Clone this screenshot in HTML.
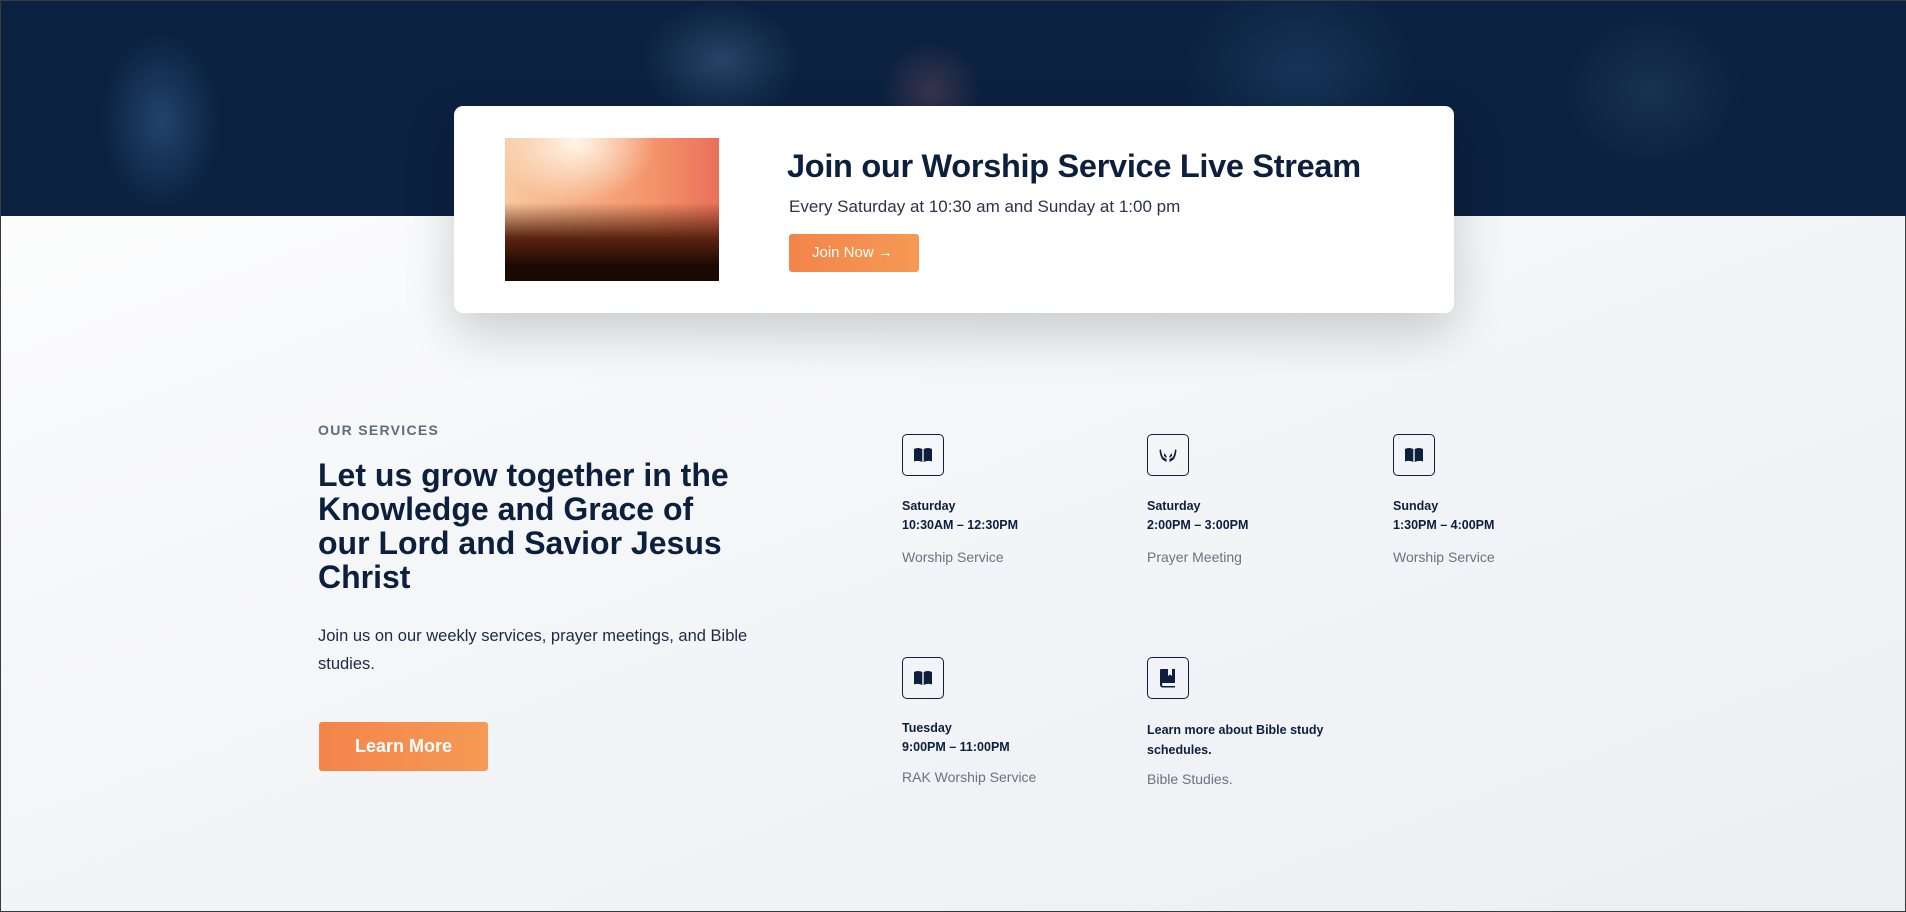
<!DOCTYPE html>
<html><head><meta charset="utf-8"><style>
*{margin:0;padding:0;box-sizing:border-box}
html,body{width:1906px;height:912px;overflow:hidden}
body{font-family:"Liberation Sans",sans-serif;position:relative;background:linear-gradient(160deg,#ffffff 0%,#f6f7f9 40%,#eceef2 100%);border:1px solid #3a3a3a}
.hero{position:absolute;left:0;top:0;width:1906px;height:215px;background:
radial-gradient(ellipse 60px 90px at 160px 120px,rgba(60,110,160,.45),transparent),
radial-gradient(ellipse 80px 60px at 720px 60px,rgba(90,130,170,.35),transparent),
radial-gradient(ellipse 50px 50px at 930px 90px,rgba(140,90,100,.35),transparent),
radial-gradient(ellipse 120px 100px at 1300px 70px,rgba(40,80,120,.4),transparent),
radial-gradient(ellipse 90px 80px at 1650px 90px,rgba(50,80,110,.35),transparent),
#0b2140}
.card{position:absolute;left:453px;top:105px;width:1000px;height:207px;background:#fff;border-radius:9px;box-shadow:0 20px 50px rgba(0,0,0,.18)}
.img{position:absolute;left:51px;top:32px;width:214px;height:143px;background:
radial-gradient(ellipse 80px 60px at 70px 5px,#fff6e8,transparent),
linear-gradient(180deg,transparent 45%,#5a2510 70%,#1a0803 90%),
linear-gradient(90deg,#f9c9a0,#f4936a 70%,#e9705a)}
.t{position:absolute;left:333px;top:42px;font-size:32.5px;font-weight:bold;color:#0c1f3d;white-space:nowrap;letter-spacing:-.3px}
.s{position:absolute;left:335px;top:91px;font-size:17px;color:#2b3448}
.jb{position:absolute;left:335px;top:128px;width:130px;height:38px;background:linear-gradient(90deg,#f3844a,#f59a55);border-radius:3px;color:#fff;font-size:15px;line-height:38px;padding-left:23px}
.os{position:absolute;left:317px;top:421px;font-size:14px;font-weight:bold;letter-spacing:1.3px;color:#5f6a7b}
.h{position:absolute;left:317px;top:457px;width:415px;font-size:32px;line-height:34px;font-weight:bold;color:#0c1f3d}
.p{position:absolute;left:317px;top:621px;width:440px;font-size:16.5px;line-height:28px;color:#1c2a44}
.lm{position:absolute;left:318px;top:721px;width:169px;height:49px;background:linear-gradient(90deg,#f3844a,#f59a55);border-radius:3px;color:#fff;font-size:18px;font-weight:bold;line-height:49px;text-align:center}
.ic{position:absolute;width:42px;height:42px;border:1.3px solid #0c1f3d;border-radius:5px;display:flex;align-items:center;justify-content:center}
.d{position:absolute;font-size:12.5px;font-weight:bold;color:#0c1f3d;line-height:19px}
.ds{position:absolute;font-size:14px;color:#6b7280}
</style></head><body>
<div class="hero"></div>
<div class="card">
<div class="img"></div>
<div class="t">Join our Worship Service Live Stream</div>
<div class="s">Every Saturday at 10:30 am and Sunday at 1:00 pm</div>
<div class="jb">Join Now &#8594;</div>
</div>
<div class="os">OUR SERVICES</div>
<div class="h">Let us grow together in the Knowledge and Grace of our Lord and Savior Jesus Christ</div>
<div class="p">Join us on our weekly services, prayer meetings, and Bible studies.</div>
<div class="lm">Learn More</div>

<div class="ic" style="left:901px;top:433px"><svg width="20" height="16" viewBox="0 0 20 16"><path d="M1 2Q5 0 9.3 2V15Q5 13 1 14.5Z M10.7 2Q15 0 19 2V14.5Q15 13 10.7 15Z" fill="#0c1f3d"/></svg></div>
<div class="d" style="left:901px;top:496px">Saturday<br>10:30AM – 12:30PM</div>
<div class="ds" style="left:901px;top:548px">Worship Service</div>

<div class="ic" style="left:1146px;top:433px"><svg width="20" height="16" viewBox="0 0 20 16"><path d="M1.5 3L3 2.5Q3.5 8 5.5 10.5L8.5 12V15L5 13Q2 10 1.5 3Z M18.5 3L17 2.5Q16.5 8 14.5 10.5L11.5 12V15L15 13Q18 10 18.5 3Z M6 6L8.5 9V11L6 9Z M14 6L11.5 9V11L14 9Z" fill="#0c1f3d"/></svg></div>
<div class="d" style="left:1146px;top:496px">Saturday<br>2:00PM – 3:00PM</div>
<div class="ds" style="left:1146px;top:548px">Prayer Meeting</div>

<div class="ic" style="left:1392px;top:433px"><svg width="20" height="16" viewBox="0 0 20 16"><path d="M1 2Q5 0 9.3 2V15Q5 13 1 14.5Z M10.7 2Q15 0 19 2V14.5Q15 13 10.7 15Z" fill="#0c1f3d"/></svg></div>
<div class="d" style="left:1392px;top:496px">Sunday<br>1:30PM – 4:00PM</div>
<div class="ds" style="left:1392px;top:548px">Worship Service</div>

<div class="ic" style="left:901px;top:656px"><svg width="20" height="16" viewBox="0 0 20 16"><path d="M1 2Q5 0 9.3 2V15Q5 13 1 14.5Z M10.7 2Q15 0 19 2V14.5Q15 13 10.7 15Z" fill="#0c1f3d"/></svg></div>
<div class="d" style="left:901px;top:718px">Tuesday<br>9:00PM – 11:00PM</div>
<div class="ds" style="left:901px;top:768px">RAK Worship Service</div>

<div class="ic" style="left:1146px;top:656px"><svg width="18" height="20" viewBox="0 0 18 20"><path d="M2 1H16V15H4Q3 15 3 16.5T4 18H16V19.5H4Q1 19.5 1 16.5V2Q1 1 2 1Z M9 1V8L11 6.5L13 8V1Z" fill="#0c1f3d" fill-rule="evenodd"/></svg></div>
<div class="d" style="left:1146px;top:719px;line-height:20px">Learn more about Bible study<br>schedules.</div>
<div class="ds" style="left:1146px;top:770px">Bible Studies.</div>
</body></html>
